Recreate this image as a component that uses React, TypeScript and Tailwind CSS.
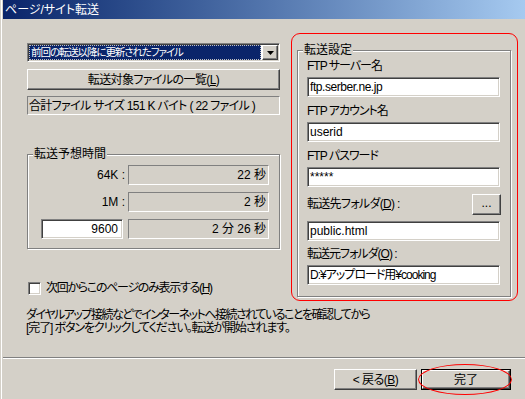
import React from "react";

const sunken =
  "border border-t-[#808080] border-l-[#808080] border-b-white border-r-white shadow-[inset_1px_1px_0_#404040,inset_-1px_-1px_0_#d4d0c8]";
const raised =
  "border border-t-white border-l-white border-b-[#404040] border-r-[#404040] shadow-[inset_-1px_-1px_0_#808080]";
const thin =
  "border border-t-[#808080] border-l-[#808080] border-b-white border-r-white";
const etched =
  "border border-[#808080] shadow-[inset_1px_1px_0_#fff,1px_1px_0_#fff]";

function Field({ label, value, h = "h-[25px]", vt = "" }: { label: React.ReactNode; value: string; h?: string; vt?: string }) {
  return (
    <>
      <div className={`${h} flex items-end pb-[3px] leading-[15px] tracking-[-1px]`}>{label}</div>
      <div className={`${sunken} h-[20px] w-[193px] bg-white flex items-center pl-[2px] leading-[14px] ${vt}`}>{value}</div>
    </>
  );
}

function TimeRow({ first, value }: { first: React.ReactNode; value: string }) {
  return (
    <div className="flex h-[20px] items-stretch">
      <div className="w-[87px] flex items-center">{first}</div>
      <div className={`${thin} w-[141px] flex items-center justify-end pr-[2px]`}>{value}</div>
    </div>
  );
}

export default function App() {
  return (
    <div className="w-[525px] h-[399px] bg-[#d4d0c8] overflow-hidden flex flex-col text-[12px] text-black font-['Liberation_Sans','Noto_Sans_CJK_JP',sans-serif] [font-feature-settings:'palt'] shadow-[inset_1px_0_0_#d4d0c8,inset_2px_0_0_#fff] pl-[3px]">
      {/* title bar */}
      <div className="h-[19px] bg-gradient-to-r from-[#0a246a] to-[#a6caf0] text-white flex items-center pl-[2px] text-[12px]">
        ページ/サイト転送
      </div>

      {/* content */}
      <div className="h-[338px] flex pl-[24px]">
        {/* left column */}
        <div className="w-[253px] flex flex-col">
          <div className={`${sunken} mt-[24px] h-[19px] bg-white flex items-center`}>
            <div className="flex-1 h-full p-[1px]">
              <div className="h-full bg-[#0a246a] text-white flex items-center pl-[2px] text-[10.5px] tracking-[-1.1px] outline outline-1 outline-dotted outline-[#c0c0c0] -outline-offset-1">
                前回の転送以降に更新されたファイル
              </div>
            </div>
            <div className={`${raised} w-[16px] h-[15px] bg-[#d4d0c8] flex items-center justify-center mr-[1px]`}>
              <svg width="7" height="4" viewBox="0 0 7 4">
                <path d="M0 0h7L3.5 4z" fill="#000" />
              </svg>
            </div>
          </div>

          <div className={`${raised} mt-[7px] h-[21px] bg-[#d4d0c8] flex items-center justify-center tracking-[-0.6px]`}>
            <span>
              転送対象ファイルの一覧(<span className="underline">L</span>)
            </span>
          </div>

          <div className={`${thin} mt-[6px] h-[19px] flex items-center pl-[1px] tracking-[-0.65px]`}>
            合計ファイル サイズ 151 K バイト ( 22 ファイル )
          </div>

          {/* group: estimated time */}
          <div className={`${etched} mt-[39px] h-[95px] w-[253px] flex flex-col`}>
            <div className="-mt-[8px] ml-[5px] px-[1px] bg-[#d4d0c8] w-fit leading-[14px]">転送予想時間</div>
            <div className="flex flex-col gap-[7px] pl-[13px] mt-[4px]">
              <TimeRow first={<div className="w-full text-right pr-[3px]">64K :</div>} value="22 秒" />
              <TimeRow first={<div className="w-full text-right pr-[3px]">1M :</div>} value="2 秒" />
              <TimeRow
                first={
                  <div className={`${sunken} w-[82px] h-[20px] bg-white flex items-center justify-end pr-[4px]`}>9600</div>
                }
                value="2 分 26 秒"
              />
            </div>
          </div>

          <div className="mt-[32px] flex items-center h-[14px]">
            <div className={`${sunken} w-[13px] h-[13px] bg-white ml-[1px]`} />
            <span className="ml-[5px] tracking-[-1.3px]">
              次回からこのページのみ表示する(<span className="underline">H</span>)
            </span>
          </div>

          <div className="mt-[14px] -ml-[1px] leading-[13px] whitespace-nowrap">
            <div className="tracking-[-1.5px]">ダイヤルアップ接続などでインターネットへ接続されていることを確認してから</div>
            <div className="tracking-[-1.1px]">[完了] ボタンをクリックしてください。転送が開始されます。</div>
          </div>
        </div>

        {/* right column */}
        <div className="ml-[11px] mt-[14px] w-[227px] h-[268px] border border-[#ff0000] rounded-[9px] pl-[5px] pt-[16px]">
          <div className={`${etched} w-[214px] h-[247px] flex flex-col`}>
            <div className="-mt-[8px] ml-[5px] px-[1px] bg-[#d4d0c8] w-fit leading-[14px]">転送設定</div>
            <div className="flex flex-col pl-[9px] -mt-[6px]">
              <Field label="FTP サーバー名" value="ftp.serber.ne.jp" h="h-[26px]" vt="tracking-[-0.45px]" />
              <Field label="FTP アカウント名" value="userid" />
              <Field label="FTP パスワード" value="*****" />
              <div className="h-[34px] w-[194px] flex items-center justify-between">
                <span className="tracking-[-0.7px]">
                  転送先フォルダ(<span className="underline">D</span>) :
                </span>
                <div className={`${raised} w-[29px] h-[21px] bg-[#d4d0c8] flex items-center justify-center leading-none pb-[3px]`}>
                  ...
                </div>
              </div>
              <div className={`${sunken} h-[20px] w-[193px] bg-white flex items-center pl-[2px]`}>public.html</div>
              <Field
                label={
                  <span>
                    転送元フォルダ(<span className="underline">O</span>) :
                  </span>
                }
                value="D:¥アップロード用¥cooking"
                h="h-[24px]"
                vt="tracking-[-1px]"
              />
            </div>
          </div>
        </div>
      </div>

      {/* separator */}
      <div className="h-[1px] bg-[#808080]" />
      <div className="h-[1px] bg-white" />

      {/* buttons */}
      <div className="flex justify-end pr-[14px] mt-[10px]">
        <div className={`${raised} w-[83px] h-[21px] flex items-center justify-center tracking-[-0.5px]`}>
          <span>
            &lt; 戻る(<span className="underline">B</span>)
          </span>
        </div>
        <div className="relative ml-[4px]">
          <div className="w-[90px] h-[21px] border border-black">
            <div className={`${raised} w-full h-full flex items-center justify-center`}>完了</div>
          </div>
          <div className="absolute -left-[3px] -top-[5px] w-[94px] h-[31px] border border-[#ff0000] rounded-[50%]" />
        </div>
      </div>
    </div>
  );
}
